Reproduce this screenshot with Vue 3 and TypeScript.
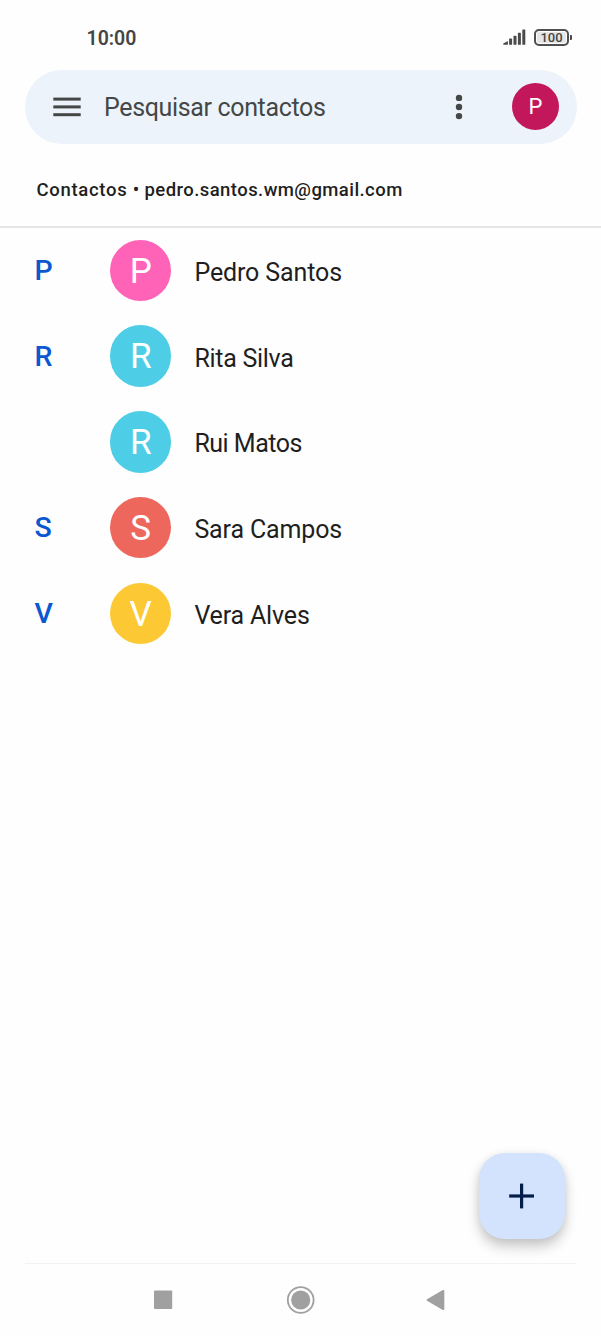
<script setup lang="ts">
interface Contact {
  section: string
  initial: string
  name: string
  tone: string
  tracking: number
}

const contacts: Contact[] = [
  { section: 'P', initial: 'P', name: 'Pedro Santos', tone: 'pink', tracking: -0.12 },
  { section: 'R', initial: 'R', name: 'Rita Silva', tone: 'cyan', tracking: -0.28 },
  { section: '', initial: 'R', name: 'Rui Matos', tone: 'cyan', tracking: -0.5 },
  { section: 'S', initial: 'S', name: 'Sara Campos', tone: 'red', tracking: -0.14 },
  { section: 'V', initial: 'V', name: 'Vera Alves', tone: 'yellow', tracking: -0.17 },
]
</script>

<template>
  <div class="phone">
    <header class="status">
      <span class="clock">10:00</span>
      <div class="indicators">
        <svg class="signal" width="24" height="18" viewBox="0 0 24 18" fill="#4a4a4a">
          <path d="M0.3 16.8v-1.4l4.6-2.4v3.8z" />
          <rect x="6.1" y="10.6" width="3" height="6.2" rx="0.6" />
          <rect x="10.5" y="7.8" width="3" height="9" rx="0.6" />
          <rect x="14.9" y="4.8" width="3" height="12" rx="0.6" />
          <rect x="19.3" y="1.4" width="3" height="15.4" rx="0.6" />
        </svg>
        <div class="battery"><span>100</span></div>
        <i class="battery-tip"></i>
      </div>
    </header>

    <div class="search">
      <svg class="menu" width="28" height="20" viewBox="0 0 28 20" fill="#444746">
        <rect x="0.3" y="0.6" width="27.4" height="3" />
        <rect x="0.3" y="8.4" width="27.4" height="3" />
        <rect x="0.3" y="16.2" width="27.4" height="3" />
      </svg>
      <span class="placeholder">Pesquisar contactos</span>
      <svg class="more" width="8" height="26" viewBox="0 0 8 26" fill="#444746">
        <circle cx="4" cy="3.9" r="3.2" />
        <circle cx="4" cy="13" r="3.2" />
        <circle cx="4" cy="22.1" r="3.2" />
      </svg>
      <div class="account">P</div>
    </div>

    <div class="source">
      <span class="label">Contactos •</span>
      <span class="email">pedro.santos.wm@gmail.com</span>
    </div>

    <main class="list">
      <div v-for="c in contacts" :key="c.name" class="row">
        <span class="section">{{ c.section }}</span>
        <span class="avatar" :class="c.tone">{{ c.initial }}</span>
        <span class="name" :style="{ letterSpacing: `${c.tracking}px` }">{{ c.name }}</span>
      </div>
    </main>

    <div class="fab-area">
      <button class="fab" aria-label="Adicionar">
        <svg width="26" height="26" viewBox="0 0 26 26" fill="#041e49">
          <rect x="0.2" y="11.4" width="24.8" height="3.2" />
          <rect x="11" y="0.6" width="3.2" height="24.8" />
        </svg>
      </button>
    </div>

    <nav class="nav">
      <svg width="301" height="30" viewBox="0 0 301 30" fill="#a0a0a0">
        <rect x="4" y="5.6" width="18.2" height="18.4" rx="1" />
        <circle cx="150.7" cy="15" r="9.6" />
        <circle cx="150.7" cy="15" r="12.9" fill="none" stroke="#a0a0a0" stroke-width="1.8" />
        <path d="M277 14.2L292.8 5.1Q294.3 4.4 294.3 6V24Q294.3 25.6 292.8 24.9L277 15.8Q275.8 15 277 14.2z" />
      </svg>
    </nav>
  </div>
</template>

<style>
body {
  margin: 0;
  background: #fefefe;
}
</style>

<style scoped>
.phone {
  width: 601px;
  height: 1336px;
  display: flex;
  flex-direction: column;
  overflow: hidden;
  background: #fefefe;
  font-family: Roboto, "Noto Sans", sans-serif;
  color: #1f1f1f;
}
.status {
  box-sizing: border-box;
  height: 70px;
  padding: 5px 29px 0 86.5px;
  display: flex;
  align-items: center;
  justify-content: space-between;
}
.clock {
  margin-top: 2px;
  font-size: 19.5px;
  font-weight: 600;
  color: #454545;
}
.indicators {
  display: flex;
  align-items: center;
}
.signal {
  margin: -1px 7px 0 0;
}
.battery {
  box-sizing: border-box;
  width: 35px;
  height: 17px;
  margin-top: -1px;
  border: 2px solid #505050;
  border-radius: 5px;
  background: #e6e6e6;
  box-shadow: inset 0 0 0 1px #fefefe;
  display: flex;
  align-items: center;
  justify-content: center;
  font-size: 13px;
  line-height: 13px;
  font-weight: 500;
  color: #454545;
}
.battery-tip {
  width: 2px;
  height: 5px;
  margin: -1px 0 0 1px;
  border-radius: 0 1px 1px 0;
  background: #4a4a4a;
}
.search {
  box-sizing: border-box;
  height: 73.5px;
  margin: 0 24.5px;
  padding: 0 17.5px 0 28.5px;
  border-radius: 37px;
  background: #ecf3fb;
  display: flex;
  align-items: center;
}
.placeholder {
  flex: 1;
  margin: 1px 0 0 23px;
  font-size: 25px;
  letter-spacing: -0.35px;
  color: #444746;
}
.more {
  margin-right: 49px;
}
.account {
  width: 47px;
  height: 47px;
  border-radius: 50%;
  background: #c2185b;
  color: #fff;
  font-size: 22px;
  line-height: 48px;
  text-align: center;
}
.source {
  box-sizing: border-box;
  height: 84px;
  padding: 11px 0 0 36.5px;
  border-bottom: 2px solid #e4e5e7;
  display: flex;
  align-items: center;
  font-size: 18.5px;
  font-weight: 500;
}
.label {
  width: 108px;
  letter-spacing: 0.7px;
  white-space: nowrap;
}
.email {
  letter-spacing: 0.43px;
}
.list {
  flex: 1;
}
.row {
  height: 85.75px;
  display: flex;
  align-items: center;
}
.section {
  width: 110px;
  box-sizing: border-box;
  padding-left: 34.5px;
  font-size: 28.5px;
  font-weight: 500;
  color: #0b57d0;
}
.avatar {
  width: 61.4px;
  height: 61.4px;
  border-radius: 50%;
  color: #fff;
  font-size: 35px;
  line-height: 63px;
  text-align: center;
}
.pink { background: #ff63b8; }
.cyan { background: #4ecde6; }
.red { background: #ee675c; }
.yellow { background: #fcc934; }
.name {
  margin: 4px 0 0 23px;
  font-size: 25px;
}
.fab-area {
  display: flex;
  justify-content: flex-end;
  padding: 0 36px 24px 0;
}
.fab {
  width: 86.5px;
  height: 86px;
  padding: 0;
  border: 0;
  border-radius: 26px;
  background: #d3e3fd;
  box-shadow: 0 8px 13px rgba(0, 0, 0, 0.2), 0 1px 8px rgba(0, 0, 0, 0.07);
  display: flex;
  align-items: center;
  justify-content: center;
}
.nav {
  box-sizing: border-box;
  height: 73px;
  margin: 0 25px;
  border-top: 1px solid #f2f2f2;
  display: flex;
  align-items: center;
  justify-content: center;
}
</style>
